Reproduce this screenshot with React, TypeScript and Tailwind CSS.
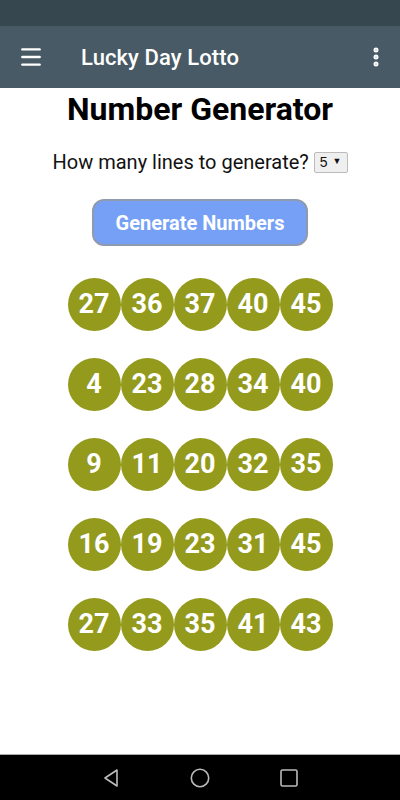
import { Menu, EllipsisVertical } from "lucide-react";

const lines = [
  [27, 36, 37, 40, 45],
  [4, 23, 28, 34, 40],
  [9, 11, 20, 32, 35],
  [16, 19, 23, 31, 45],
  [27, 33, 35, 41, 43],
];

function Ball({ n }: { n: number }) {
  return (
    <div className="flex justify-center items-center w-[53px] h-[53px] rounded-full bg-[#949a1b] text-white font-bold text-[27px] leading-none">
      {n}
    </div>
  );
}

export default function App() {
  return (
    <div className="flex flex-col w-[400px] h-[800px] bg-white font-['Roboto',sans-serif] overflow-hidden">
      <div className="h-[26px] bg-[#37474f]" />
      <header className="flex items-center h-[62px] bg-[#485a65] text-white">
        <Menu className="ml-[18px] w-[26px] h-[26px]" strokeWidth={2.2} />
        <span className="ml-[37px] text-[22px] font-medium tracking-[0.1px]">Lucky Day Lotto</span>
        <EllipsisVertical className="ml-auto mr-[12px] w-[24px] h-[24px]" strokeWidth={3} />
      </header>

      <main className="flex flex-col flex-1 items-center">
        <h1 className="mt-[1px] text-[32px] font-bold leading-[40px] text-black">Number Generator</h1>
        <div className="flex items-center mt-[18px] text-[20px] text-[#111]">
          <span>How many lines to generate?</span>
          <div className="flex items-center gap-[5px] ml-[5px] px-[5px] h-[21px] border border-[#bbb] rounded-[2px] bg-[#efefef] text-[14px] font-['Liberation_Sans',sans-serif]">
            <span>5</span>
            <span className="text-[9px]">▼</span>
          </div>
        </div>
        <button
          type="button"
          className="mt-[22px] w-[216px] h-[47px] rounded-[12px] bg-[#76a0f6] border-2 border-[#8e9aae] text-white text-[20px] font-bold"
        >
          Generate Numbers
        </button>

        <div className="flex flex-col gap-[27px] mt-[32px]">
          {lines.map((line, i) => (
            <div key={i} className="flex">
              {line.map((n, j) => (
                <Ball key={j} n={n} />
              ))}
            </div>
          ))}
        </div>
      </main>

      <nav className="flex justify-center items-center gap-[69px] h-[46px] bg-black border-t border-[#aaa]">
        <svg width="20" height="20" viewBox="0 0 20 20" fill="none" stroke="#bbb" strokeWidth="1.6">
          <path d="M16 2 L4 10 L16 18 Z" strokeLinejoin="round" />
        </svg>
        <svg width="20" height="20" viewBox="0 0 20 20" fill="none" stroke="#bbb" strokeWidth="1.6">
          <circle cx="10" cy="10" r="8.7" />
        </svg>
        <svg width="20" height="20" viewBox="0 0 20 20" fill="none" stroke="#bbb" strokeWidth="1.6">
          <rect x="2" y="2" width="16" height="16" rx="1.5" />
        </svg>
      </nav>
    </div>
  );
}
